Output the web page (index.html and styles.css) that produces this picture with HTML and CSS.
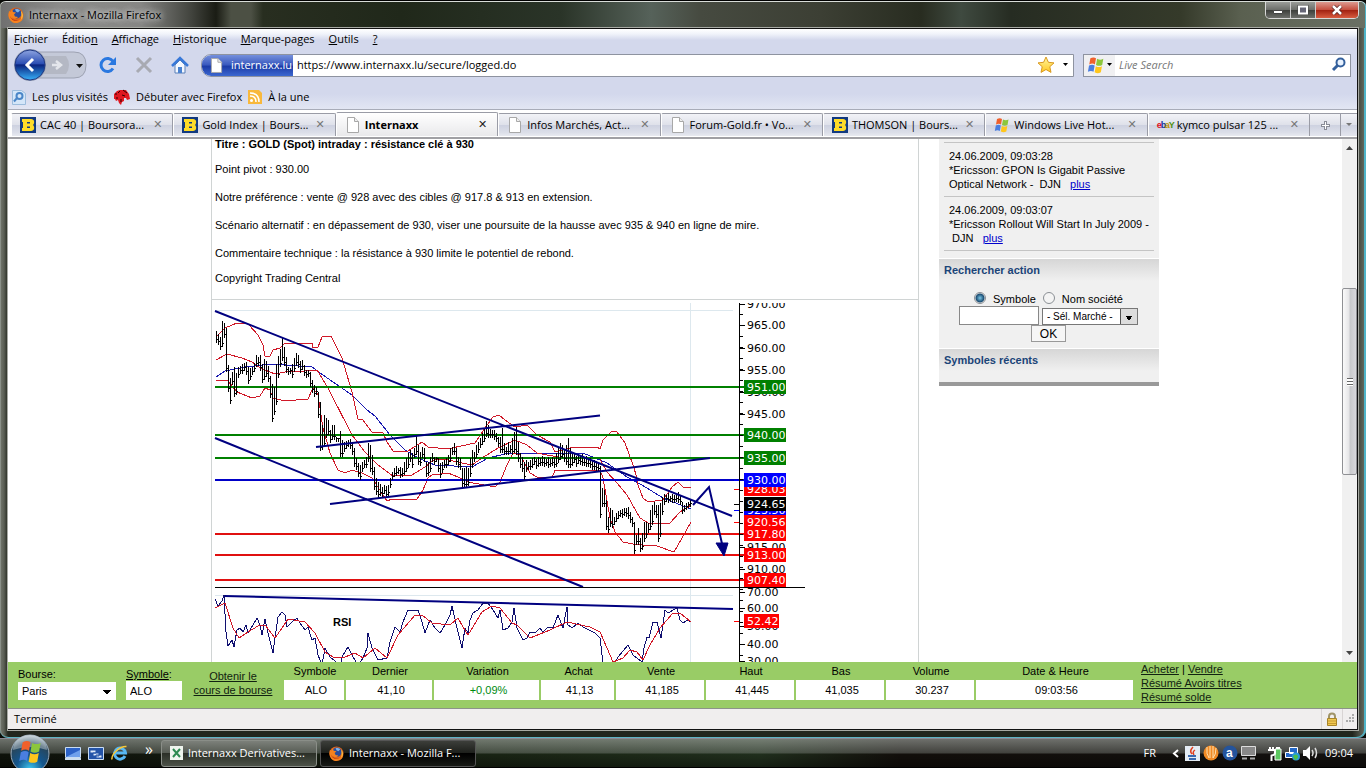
FILE: index.html
```html
<!DOCTYPE html>
<html lang="fr">
<head>
  <meta charset="UTF-8">
  <title>Internaxx - Mozilla Firefox</title>
  <link rel="stylesheet" href="styles.css">
</head>
<body>

  <svg class="defs" width="0" height="0">
    <defs>
      <linearGradient id="g-back" x1="0" y1="0" x2="0" y2="1">
        <stop offset="0" stop-color="#8ea4e0"/><stop offset=".45" stop-color="#2c4fb4"/>
        <stop offset=".5" stop-color="#0a2480"/><stop offset="1" stop-color="#38b0f8"/>
      </linearGradient>
      <linearGradient id="g-star" x1="0" y1="0" x2="0" y2="1">
        <stop offset="0" stop-color="#fff6a0"/><stop offset="1" stop-color="#ffc820"/>
      </linearGradient>
      <radialGradient id="g-orb" cx=".5" cy=".9" r=".9">
        <stop offset="0" stop-color="#40c8f0"/><stop offset=".4" stop-color="#14568e"/><stop offset=".75" stop-color="#27465c"/><stop offset="1" stop-color="#b8c8d0"/>
      </radialGradient>
    </defs>
    <symbol id="firefox" viewBox="0 0 16 16">
      <circle cx="8" cy="8" r="7.5" fill="#e0661a"/>
      <circle cx="8.500" cy="6.500" r="5" fill="#2b4c9c"/>
      <path d="M7 2.500c2-1 4 0 5 1l-2 2-2-1z" fill="#7fb4e8"/>
      <path d="M1 4l1.500 1L4 2.500 5 5l3 .5-2 2 1 2 3 .5c-2 2.500-5 2-6 0 0 2.500 3 4 6 3.500 3-.5 4.500-4 4-7 3 5-1 9.500-6 9.500S0 11 .5 7z" fill="#f58220"/>
      <path d="M13 4c2 2 2.500 6 0 8.500 1-3 .5-6 0-8.500z" fill="#ffd24a"/>
      <path d="M2 9c1 4 5 6 9 4.500-3 .5-7-.5-9-4.500z" fill="#b93010"/>
    </symbol>
    <symbol id="page" viewBox="0 0 14 16">
      <path d="M1.500.5h7l4 4v11h-11z" fill="#fff" stroke="#a8a8a8"/>
      <path d="M8.500.5v4h4" fill="#eee" stroke="#a8a8a8"/>
    </symbol>
    <symbol id="bourso" viewBox="0 0 16 16">
      <path d="M0 0h16v16H0z" fill="#123a80"/>
      <path d="M2 2h9c3.500 0 4 4 2 6 2 2 1.500 6-2 6H2v-3h1V5H2z" fill="#ffdc28"/>
      <path d="M7 5h3v1.500H7zM7 9.500h3V11H7z" fill="#123a80"/>
    </symbol>
    <symbol id="winflag" viewBox="0 0 16 16">
      <path d="M3 2c2-1 3.500-1 5 0L7 7.500c-1.500-1-3-1-5 0z" fill="#f0602c"/>
      <path d="M9 2.500c2 1 3.500 1 5.500 0L13.500 8c-2 1-3.500 1-5.500 0z" fill="#8cc63c"/>
      <path d="M1.800 8.500c2-1 3.500-1 5 0l-1 5.500c-1.500-1-3-1-5 0z" fill="#4a7ee0"/>
      <path d="M7.800 9c2 1 3.500 1 5.500 0l-1 5.500c-2 1-3.500 1-5.500 0z" fill="#ffc61c"/>
    </symbol>
  </svg>

  <div class="window">
    <header class="titlebar">
      <svg class="ico16"><use href="#firefox"/></svg>
      <span class="title">Internaxx - Mozilla Firefox</span>
      <div class="winbuttons">
        <button aria-label="Réduire"><svg width="12" height="10"><path d="M1.500 5.500h9v3h-9z" fill="#fff" stroke="#444"/></svg></button>
        <button aria-label="Agrandir"><svg width="12" height="10"><path d="M2 1.500h8v7H2z" fill="none" stroke="#444" stroke-width="3"/><path d="M2 1.500h8v7H2z" fill="#667" stroke="#fff" stroke-width="2"/></svg></button>
        <button class="close" aria-label="Fermer"><svg width="12" height="10"><path d="M2 1l8 8M10 1l-8 8" stroke="#522" stroke-width="4"/><path d="M2 1l8 8M10 1l-8 8" stroke="#fff" stroke-width="2.500"/></svg></button>
      </div>
    </header>

    <div class="client">
      <div class="chrome">
        <nav class="menubar">
          <a href="#"><u>F</u>ichier</a>
          <a href="#">Éditio<u>n</u></a>
          <a href="#"><u>A</u>ffichage</a>
          <a href="#"><u>H</u>istorique</a>
          <a href="#"><u>M</u>arque-pages</a>
          <a href="#"><u>O</u>utils</a>
          <a href="#"><u>?</u></a>
        </nav>

        <div class="navbar">
          <button class="back" aria-label="Précédent, Suivant">
            <svg width="78" height="34">
              <path d="M18 4h46q12 0 12 13t-12 13H18z" fill="#c4c9d8" stroke="#9da2b2"/>
              <path d="M34 8h22q6 9 0 18H34z" fill="#b4b8c4"/>
              <path d="M46 13l5 4-5 4M51 17h-9" fill="none" stroke="#e4e6ec" stroke-width="2.500"/>
              <path d="M66 16h7l-3.500 4z" fill="#111"/>
              <circle cx="20" cy="17" r="16" fill="#8d96ae"/>
              <circle cx="20" cy="17" r="15" fill="url(#g-back)" stroke="#213a84"/>
              <path d="M23 11l-6 6 6 6" fill="none" stroke="#fff" stroke-width="3"/>
            </svg>
          </button>
          <button class="reload" aria-label="Actualiser">
            <svg width="18" height="18"><path d="M14 12.500a6.500 6.500 0 1 1 0-7" fill="none" stroke="#2a78e0" stroke-width="3"/><path d="M17 1v8H9z" fill="#2a78e0"/></svg>
          </button>
          <button class="stop" aria-label="Arrêter">
            <svg width="18" height="18"><path d="M2 2l14 14M16 2L2 16" stroke="#a8aab2" stroke-width="3"/></svg>
          </button>
          <button class="home" aria-label="Accueil">
            <svg width="18" height="18"><path d="M4 9v8h10V9L9 4z" fill="#f4f8ff" stroke="#5a80b8"/><path d="M1 10l8-8 8 8" fill="none" stroke="#3878d8" stroke-width="2.500"/><path d="M7 11h4v6H7z" fill="#4a82d0"/></svg>
          </button>

          <div class="urlbar">
            <span class="identity"><svg width="13" height="15"><use href="#page"/></svg>internaxx.lu</span>
            <input type="text" aria-label="Adresse" value="https://www.internaxx.lu/secure/logged.do">
            <svg width="18" height="18"><path d="M9 1l2.400 5.300 5.600.6-4.200 3.800 1.200 5.700-5-2.900-5 2.900 1.200-5.700L1 6.900l5.600-.6z" fill="url(#g-star)" stroke="#d89820"/></svg>
            <svg class="drop" width="6" height="4"><path d="M0 0h5L2.500 3z"/></svg>
          </div>

          <div class="searchbar">
            <button aria-label="Moteur de recherche"><svg width="18" height="18"><use href="#winflag"/></svg><svg width="6" height="4"><path d="M0 0h5L2.500 3z"/></svg></button>
            <input type="text" aria-label="Recherche" placeholder="Live Search">
            <svg width="16" height="16"><circle cx="9.500" cy="5.500" r="4" fill="#e8f2ff" stroke="#34609c" stroke-width="2"/><path d="M6.500 8.500L2 13" stroke="#34609c" stroke-width="3"/></svg>
          </div>
        </div>

        <div class="bookmarks">
          <a href="#"><svg width="14" height="16"><path d="M.5 1.500h9l4 3v11H.5z" fill="#d4e6f8" stroke="#9bbcdc"/><circle cx="7.500" cy="7" r="3" fill="none" stroke="#4a86c8" stroke-width="2"/><path d="M5 9l-3 3.500" stroke="#4a86c8" stroke-width="2"/></svg>Les plus visités</a>
          <a href="#"><svg width="16" height="16"><path d="M0 5l3-3 3-1 6 0 3 4 1 5-3 1-1-2-2 0 0 3-2 1-1 3-2-2-1-3-2 1-1-2-1 0z" fill="#e01820"/><path d="M1 5h2M6 2l-2 2M2 9h2M9 1l4 3M7 13v-3M11 7l-3-1" stroke="#300" stroke-width="1"/></svg>Débuter avec Firefox</a>
          <a href="#"><svg width="14" height="14"><path d="M0 0h11l3 3v11H0z" fill="#f8b83c"/><circle cx="3.500" cy="10.500" r="1.500" fill="#fff"/><path d="M2 6q6 0 6 6M2 3q9 0 9 9" fill="none" stroke="#fff" stroke-width="1.500"/></svg>À la une</a>
        </div>
      </div>

      <div class="tabs">
        <a href="#" class="tab"><svg class="ico16"><use href="#bourso"/></svg><span>CAC 40 | Boursora...</span><i>✕</i></a>
        <a href="#" class="tab"><svg class="ico16"><use href="#bourso"/></svg><span>Gold Index | Bours...</span><i>✕</i></a>
        <a href="#" class="tab active"><svg class="ico16"><use href="#page"/></svg><span>Internaxx</span><i>✕</i></a>
        <a href="#" class="tab"><svg class="ico16"><use href="#page"/></svg><span>Infos Marchés, Act...</span><i>✕</i></a>
        <a href="#" class="tab"><svg class="ico16"><use href="#page"/></svg><span>Forum-Gold.fr • Vo...</span><i>✕</i></a>
        <a href="#" class="tab"><svg class="ico16"><use href="#bourso"/></svg><span>THOMSON | Bours...</span><i>✕</i></a>
        <a href="#" class="tab"><svg class="ico16"><use href="#winflag"/></svg><span>Windows Live Hot...</span><i>✕</i></a>
        <a href="#" class="tab"><span class="ebay"><b>e</b><b>b</b><b>a</b><b>Y</b></span><span>kymco pulsar 125 ...</span><i>✕</i></a>
        <button class="newtab" aria-label="Nouvel onglet"><svg width="9" height="9"><path d="M4.500 0v9M0 4.500h9" stroke="#8a8d98" stroke-width="3"/><path d="M4.500 1v7M1 4.500h7" stroke="#fff"/></svg></button>
        <button class="alltabs" aria-label="Liste des onglets"><svg width="6" height="4"><path d="M0 0h6L3 3z" fill="#777"/></svg></button>
      </div>

      <div class="viewport">
        <div class="page">
          <main class="analysis">
            <div class="article">
              <h1>Titre : GOLD (Spot) intraday : résistance clé à 930</h1>
              <p>Point pivot : 930.00</p>
              <p>Notre préférence : vente @ 928 avec des cibles @ 917.8 &amp; 913 en extension.</p>
              <p>Scénario alternatif : en dépassement de 930, viser une poursuite de la hausse avec 935 &amp; 940 en ligne de mire.</p>
              <p>Commentaire technique : la résistance à 930 limite le potentiel de rebond.</p>
              <p>Copyright Trading Central</p>
            </div>
            <svg class="chart" width="706" height="359" viewBox="212 303 706 359">
              <!-- grid -->
              <path d="M215 310.500h518M215 595.500h518M690.500 303v359" stroke="#dde8ee"/>

              <!-- moving average and bands -->
              <g class="thin">
                <polyline class="blue" points="216,377 225,371 245,367 272,364 312,367 320,373 352,395 367,410 375,416 390,435 405,450 418,458 435,465 472,467 488,458 505,454 520,453 583,453 607,463 627,477 642,485 663,498 691,509"/>
                <polyline points="216,337 225,328 237,323 248,324 258,335 263,345 265,356 270,356 273,350 280,348 285,343 312,343 313,348 318,347 322,337 331,336 337,348 342,358 352,392 358,419 363,420 372,432 383,433 387,442 393,451 408,451 422,442 428,447 438,448 452,448 475,443 485,428 493,417 499,415 505,420 515,427 527,425 537,435 550,442 555,452 563,450 573,447 597,447 600,449 603,440 612,431 617,432 625,443 633,465 637,478 638,485 643,498 648,502 663,500 672,487 678,482 683,487 691,488"/>
                <polyline points="216,360 227,354 242,358 252,362 260,368 275,374 285,372 305,371 317,370 328,388 352,435 365,452 378,465 393,476 412,475 425,467 435,459 448,460 472,465 482,458 498,448 515,440 527,445 537,453 563,458 600,459 607,472 617,483 627,495 640,518 650,524 670,523 680,512 691,505"/>
                <polyline points="216,380 228,381 237,392 252,398 260,396 265,388 270,390 273,398 285,401 308,399 313,388 318,395 323,428 330,453 338,470 345,473 352,470 362,473 372,478 387,501 392,499 417,499 423,490 428,478 432,475 448,473 458,477 468,482 495,487 500,482 507,465 513,453 520,455 530,473 537,477 552,478 555,470 600,470 603,478 610,518 615,532 623,542 633,544 643,545 657,546 674,552 682,538 691,522"/>
              </g>

              <!-- support and resistance levels -->
              <path class="level" stroke="#008000" d="M215 387h529M215 435h529M215 458h529"/>
              <path class="level" stroke="#0000c8" d="M215 480h529"/>
              <path class="level" stroke="#e01010" d="M215 534h529M215 555h529M215 580h529"/>

              <path id="bars" stroke="#000" fill="none"/>

              <!-- trend lines -->
              <path class="trend" d="M215 311L732 516M215 438L583 587M316 447L600 415.500M330 504L710 458M693 505L709 487L723 548M224 596L733 609"/>
              <path d="M716 543l12 0-4 13z" fill="#000080" stroke="#000080"/>

              <!-- RSI -->
              <g class="thin">
                <polyline class="navy" points="215,599 218,606 222,601 224,595 226,632 228,646 232,640 234,647 237,630 240,628 243,632 246,625 248,633 253,625 257,618 260,625 262,635 265,619 268,633 273,653 275,638 278,617 282,612 285,615 287,627 292,622 297,618 300,623 305,630 308,627 312,640 315,638 318,655 322,665 325,648 330,657 340,665 343,655 348,647 353,657 358,665 363,658 367,648 368,633 372,648 378,660 387,658 390,642 395,627 400,632 403,622 408,610 413,611 418,610 422,622 425,633 430,620 435,628 440,633 445,625 450,615 452,606 457,628 462,648 465,628 468,633 470,620 473,613 478,610 483,603 488,603 493,610 498,618 500,610 503,630 508,628 512,622 514,608 517,628 523,640 527,638 530,632 535,633 540,628 543,632 548,627 553,628 558,615 563,628 567,607 568,625 572,628 578,623 583,627 595,633 600,638 603,663 615,663 618,657 628,645 633,655 642,662 644,648 647,637 649,638 653,622 657,622 661,638 665,610 668,613 677,608 680,620 683,623 688,620 691,622"/>
                <polyline points="215,608 225,603 233,628 239,638 248,632 258,626 265,625 275,638 282,628 288,619 305,622 315,633 325,652 333,657 345,657 355,653 363,658 375,648 387,658 398,635 415,615 422,615 432,623 450,625 458,618 463,627 468,635 482,612 492,606 500,608 512,623 517,625 530,638 550,630 567,622 590,627 600,632 607,648 613,662 623,658 630,650 637,652 643,660 650,645 660,628 673,613 680,613 691,622"/>
              </g>
              <text class="rsi" x="333" y="626">RSI</text>

              <!-- scale -->
              <path d="M215 587.500h590" stroke="#000"/>
              <path d="M739.500 303v359" stroke="#000"/>
              <g id="scale"></g>
            </svg>
          </main>

          <aside class="side">
            <div class="news">
              <p>24.06.2009, 09:03:28<br>*Ericsson: GPON Is Gigabit Passive<br>Optical Network -&nbsp; DJN &nbsp; <a href="#">plus</a></p>
              <p>24.06.2009, 09:03:07<br>*Ericsson Rollout Will Start In July 2009 -<br>&nbsp;DJN &nbsp; <a href="#">plus</a></p>
            </div>
            <h2>Rechercher action</h2>
            <form class="search">
              <div class="radios">
                <input type="radio" name="type" id="r-sym" checked><label for="r-sym">Symbole</label>
                <input type="radio" name="type" id="r-nom"><label for="r-nom">Nom société</label>
              </div>
              <div class="fields">
                <input type="text" aria-label="Valeur">
                <select aria-label="Marché"><option>- Sél. Marché -</option></select>
              </div>
              <button type="button">OK</button>
            </form>
            <h2>Symboles récents</h2>
          </aside>
        </div>

        <div class="scrollbar">
          <svg width="7" height="4"><path d="M0 4h7L3.500 0z" fill="#444"/></svg>
          <div class="track">
            <div class="thumb"><span></span></div>
          </div>
          <svg width="7" height="4"><path d="M0 0h7L3.500 4z" fill="#444"/></svg>
        </div>
      </div>

      <footer class="quote">
        <div class="field">
          <label for="bourse">Bourse:</label>
          <select id="bourse"><option>Paris</option></select>
        </div>
        <div class="field short">
          <label for="symbole"><u>Symbole</u>:</label>
          <input type="text" id="symbole" value="ALO">
        </div>
        <a href="#" class="get">Obtenir le<br>cours de bourse</a>
        <table>
          <colgroup><col class="c60"><col class="c86"><col class="c105"><col class="c73"><col class="c88"><col class="c88"><col class="c88"><col class="c88"><col class="c157"></colgroup>
          <thead>
            <tr><th>Symbole</th><th>Dernier</th><th>Variation</th><th>Achat</th><th>Vente</th><th>Haut</th><th>Bas</th><th>Volume</th><th>Date &amp; Heure</th></tr>
          </thead>
          <tbody>
            <tr><td>ALO</td><td>41,10</td><td class="up">+0,09%</td><td>41,13</td><td>41,185</td><td>41,445</td><td>41,035</td><td>30.237</td><td>09:03:56</td></tr>
          </tbody>
        </table>
        <div class="links"><a href="#">Acheter</a> | <a href="#">Vendre</a><br><a href="#">Résumé Avoirs titres</a><br><a href="#">Résumé solde</a></div>
      </footer>

      <div class="status">
        <span>Terminé</span>
        <div class="lock"><svg width="12" height="15"><path d="M3 7V4.500a3 3 0 0 1 6 0V7" fill="none" stroke="#a09468" stroke-width="2"/><path d="M1.500 6.500h9v7h-9z" fill="#f0c850" stroke="#a88428"/><path d="M2 9h8M2 11.500h8" stroke="#c89c34"/></svg></div>
        <svg width="12" height="12"><path d="M9 2h2M6 5h2M9 5h2M3 8h2M6 8h2M9 8h2" stroke="#aaa" stroke-width="2"/></svg>
      </div>
    </div>
  </div>

  <div class="taskbar">
    <button class="orb" aria-label="Démarrer">
      <svg width="42" height="34" viewBox="0 0 42 34">
        <circle cx="21" cy="20" r="19" fill="url(#g-orb)" stroke="#9ab" />
        <path d="M4 16a17 15 0 0 1 34 0q-17-6-34 0z" fill="#fff" opacity=".35"/>
        <svg x="9" y="5" width="25" height="25"><use href="#winflag"/></svg>
      </svg>
    </button>
    <div class="quick">
      <a href="#" aria-label="Bureau"><svg width="16" height="13"><path d="M.5.5h15v10H.5z" fill="#2c62c8" stroke="#c8dcf4"/><path d="M1 10L15 3v7z" fill="#6fa0ec"/><path d="M0 12h16" stroke="#cde" stroke-width="2"/></svg></a>
      <a href="#" aria-label="Basculer"><svg width="16" height="13"><path d="M.5.5h15v12H.5z" fill="#2454a8" stroke="#c8dcf4"/><path d="M2 3h6v3H2zM5 6h6v3H5zM8 8h6v3H8z" fill="#dfeaf8" stroke="#2454a8"/></svg></a>
      <a href="#" aria-label="Internet Explorer"><svg width="17" height="16"><path d="M14 11a5.500 5.500 0 1 1 .5-3H5" fill="none" stroke="#58b8f4" stroke-width="3"/><path d="M1 14.500C0 9 9 1 15.500 1.500" fill="none" stroke="#f8c838" stroke-width="1.500"/></svg></a>
    </div>
    <span class="more">»</span>
    <button class="task"><svg width="13" height="14"><path d="M0 0h13v14H0z" fill="#eef4ee"/><path d="M3 3l7 8M10 3l-7 8" stroke="#2c8a50" stroke-width="2"/></svg>Internaxx Derivatives...</button>
    <button class="task current"><svg width="15" height="15"><use href="#firefox"/></svg>Internaxx - Mozilla F...</button>

    <div class="tray">
      <span class="lang">FR</span>
      <svg width="7" height="9"><path d="M6 1L2 4.500 6 8" fill="none" stroke="#fff" stroke-width="2"/></svg>
      <svg class="java" width="15" height="15"><path d="M0 0h15v15H0z" fill="#e4ecf4"/><path d="M8 1q-4 4-1 7M10 4q-3 2-1 5" fill="none" stroke="#e04020" stroke-width="1.500"/><path d="M3 10h8M4 13h7" stroke="#3a68b0" stroke-width="2"/></svg>
      <svg width="16" height="16"><circle cx="8" cy="8" r="7.500" fill="#f08a24"/><path d="M4 2q-1 7 2 11M7 1v12M10 1v12M13 3q0 7-3 10" fill="none" stroke="#ffe0b0"/></svg>
      <svg width="16" height="16"><circle cx="8" cy="8" r="7.500" fill="#24549c"/><text x="4" y="12" class="avast">a</text></svg>
      <svg width="15" height="14"><path d="M.5.500h14v9H.5z" fill="#888" stroke="#ddd"/><path d="M1 12.500h5M9 12.500h5" stroke="#aaa" stroke-width="2"/></svg>
      <svg class="gap" width="14" height="15"><path d="M7 3h6v11H7z" fill="#5cc860" stroke="#fff"/><path d="M8 1h4v2H8z" fill="#fff"/><path d="M0 4h7v3q0 2-3.500 2.500V15M2 1v3M5 1v3" fill="none" stroke="#fff" stroke-width="2"/></svg>
      <svg width="15" height="15"><path d="M4.500 1.500h8v6h-8zM.5 6.500h8v5h-8z" fill="#2468c8" stroke="#fff"/><circle cx="11" cy="10.500" r="4" fill="#2c9ad8"/><path d="M8 10q3-3 5 0 0 3-3 4z" fill="#4cc048"/></svg>
      <svg width="15" height="14"><path d="M0 4h3l4-4v14l-4-4H0z" fill="#fff"/><path d="M9 4q2 3 0 6M12 2q3 5 0 10" fill="none" stroke="#ddd" stroke-width="1.500"/></svg>
      <span class="clock">09:04</span>
    </div>
  </div>

  <script src="chart.js"></script>
</body>
</html>
```
FILE: styles.css
```css
* { box-sizing: border-box; }
body { margin: 0; height: 100vh; display: flex; flex-direction: column; overflow: hidden; background: #0a0c08; font: 11px/14px "Liberation Sans", Arial, sans-serif; color: #000; }
button { padding: 0; border: none; background: none; font: inherit; color: inherit; }
input, select { font: inherit; color: inherit; border: none; margin: 0; border-radius: 0; }
svg { display: block; flex: none; }
.defs { position: absolute; }
.ico16 { width: 16px; height: 16px; }

/* window frame */
.window { flex: 1; min-height: 0; display: flex; flex-direction: column; padding: 0 8px 7px; border-top: 1px solid #000; border-bottom: 1px solid #5fb4c4; border-radius: 6px 6px 8px 8px; box-shadow: inset 0 1px #d8dcd8, inset 1px 0 #8a9088, inset -2px 0 #4fb4c8;
  background: linear-gradient(90deg, #74786e 0, #5a5e54 4px, #22261e 8px, #22261e 99%, #6c7268 100%); }
.titlebar { height: 26px; flex: none; display: flex; align-items: center; gap: 5px; margin: 1px -7px 0; padding-left: 7px; border-radius: 5px 5px 0 0;
  background: linear-gradient(90deg, #707070 0, #8c8c8a 60px, #868684 140px, #42443e 190px, #1a1c14 215px, #4c5044 230px, #4c5044 250px, #282e20 262px, #20281a 400px, #2a3428 560px, #56625a 650px, #464a40 700px, #3c3f34 820px, #282c20 920px, #3f4a40 960px, #262c22 1010px, #353a2a 1180px, #5a6050 1240px, #6a7064 100%); }
.title { font: 11px/16px "Open Sans", sans-serif; flex: 1; text-shadow: 0 0 6px #ddd, 0 0 6px #ddd; }
.winbuttons { align-self: flex-start; display: flex; height: 17px; margin-right: 6px; border: 1px solid #d8d8d8; border-top: none; border-radius: 0 0 5px 5px; overflow: hidden; }
.winbuttons button { width: 25px; display: flex; align-items: center; justify-content: center; border-right: 1px solid #ccc; background: linear-gradient(#9a9c98, #6a6c68 50%, #3c3e3a 50%, #6c6e6a); }
.winbuttons .close { width: 42px; border: none; background: linear-gradient(#dc9a90, #c44c3c 50%, #a02010 50%, #d85c40); }
.client { flex: 1; min-height: 0; display: flex; flex-direction: column; border: 1px solid #111; border-width: 1px 1px 1px 0; outline: 1px solid #a8aaa4; background: #fff; }

/* toolbars */
.chrome { font: 11px/16px "Open Sans", sans-serif; background: linear-gradient(#fff 0, #f0f3fa 5px, #d3d8ec 11px, #d3d8ec 65px, #e2e6f3 100%); border-bottom: 1px solid #a8acb8; }
.menubar { display: flex; gap: 14px; height: 19px; align-items: center; padding-left: 6px; }
.menubar a, .bookmarks a { color: #000; text-decoration: none; }
.navbar { display: flex; align-items: center; height: 34px; padding-right: 6px; }
.navbar .back { margin-left: 2px; }
.reload { margin-left: 11px; }
.stop, .home { margin-left: 18px; }
.urlbar { flex: 1; display: flex; align-items: center; height: 23px; margin-left: 12px; padding-right: 4px; gap: 4px; background: #fff; border: 1px solid #8e93a0; border-radius: 10px 0 0 10px; overflow: hidden; }
.urlbar input { flex: 1; min-width: 0; padding: 0; background: none; }
.urlbar .drop { margin: 0 0 0 4px; }
.identity { display: flex; align-items: center; gap: 8px; height: 100%; padding: 0 1px 0 8px; color: #fff; background: linear-gradient(#7590dc, #3c5cc0 45%, #1c3ca8 55%, #3c68d0); }
.searchbar { display: flex; align-items: center; width: 268px; height: 23px; margin-left: 9px; padding-right: 3px; background: #fff; border: 1px solid #8e93a0; }
.searchbar button { display: flex; align-items: center; gap: 2px; width: 31px; height: 100%; padding-left: 3px; background: #f0f0f2; }
.searchbar input { flex: 1; min-width: 0; padding: 0 4px; font-style: italic; background: none; }
.searchbar input::placeholder { color: #777; }
.bookmarks { display: flex; align-items: center; gap: 6px; height: 27px; padding: 3px 0 0 4px; }
.bookmarks a { display: flex; align-items: center; gap: 6px; }

/* tabs */
.tabs { display: flex; height: 29px; padding: 3px 0 1px 3px; background: #fff; border-bottom: 2px solid #a0a0a4; font: 11px/16px "Open Sans", sans-serif; }
.tab { flex: 1; min-width: 0; display: flex; align-items: center; gap: 4px; padding: 0 10px 0 8px; color: #000; text-decoration: none; white-space: nowrap; border: 1px solid #9a9ca6; border-left-color: #fff; border-bottom: none; border-radius: 2px 2px 0 0; background: linear-gradient(#f2f3f7, #dfe1ea 48%, #cdd1e0 50%, #dcdfe9 85%, #e8eaf0); }
.tab span { flex: 1; }
.tab i { font: 11px/16px "DejaVu Sans", sans-serif; color: #777; }
.tab.active { margin-top: -1px; font-weight: bold; background: linear-gradient(#fff, #e9e9eb); }
.tab.active i { color: #222; }
.tab .ebay { flex: none; width: 16px; display: flex; font: bold 9px/12px "Liberation Sans", sans-serif; }
.ebay b { width: 4px; flex: none; }
.ebay b:nth-child(1) { color: #e01020; }
.ebay b:nth-child(2) { color: #1030a0; }
.ebay b:nth-child(3) { color: #c09000; }
.ebay b:nth-child(4) { color: #509010; }
.newtab, .alltabs { display: flex; align-items: center; justify-content: center; border: 1px solid #9a9ca6; border-width: 1px 1px 0 0; background: linear-gradient(#f2f3f7, #dfe1ea 48%, #cdd1e0 50%, #e4e6ee); }
.newtab { width: 31px; }
.alltabs { width: 16px; border-right: none; }

/* web page */
.viewport { flex: 1; min-height: 0; display: flex; }
.page { flex: 1; min-width: 0; display: flex; align-items: flex-start; gap: 20px; overflow: hidden; padding-left: 203px; }
.analysis { flex: none; width: 708px; border: 1px solid #d0d4d4; border-width: 0 1px; }
.article { padding: 0 3px 14px; border-bottom: 1px solid #d0d4d4; margin-bottom: 3px; }
.article h1 { margin: -2px 0 11px; font-size: 11px; }
.article p { margin: 0 0 14px; }
.article p:last-child { margin: -3px 0 0; }
.chart .thin { fill: none; stroke: #d01828; shape-rendering: crispEdges; }
.chart .blue { stroke: #1818b0; }
.chart .navy { stroke: #101070; }
.chart .level { fill: none; stroke-width: 2; }
.chart .trend { fill: none; stroke: #000080; stroke-width: 2; }
#bars { shape-rendering: crispEdges; }
.chart text { font: 11px "DejaVu Sans", Verdana, sans-serif; }
.chart .rsi { font: bold 11px "Liberation Sans", sans-serif; }

.side { width: 220px; flex: none; background: #f0f0f0; border-bottom: 4px solid #999; }
.news { padding: 3px 5px 7px; }
.news p { margin: 0; padding: 6px 5px 5px; border-top: 1px solid #c4c4c4; white-space: nowrap; }
.news p:last-child { border-bottom: 1px solid #c4c4c4; }
.news a { color: #00c; }
.side h2 { height: 34px; margin: 0; padding: 4px 5px 0; font-size: 11px; color: #1a4478; border-top: 1px solid #fff; background: linear-gradient(#d6d6d6, #f0f0f0 22px); }
.search { display: flex; flex-direction: column; align-items: center; height: 56px; padding-right: 1px; }
.radios { display: flex; align-items: flex-start; gap: 7px; height: 14px; }
.radios input { appearance: none; width: 12px; height: 12px; border: 1px solid #8a8f94; border-radius: 50%; background: #f4f4f4; }
.radios input:checked { background: radial-gradient(#7ac8e8 0, #1a4a70 4px, #eee 5px); }
.fields { display: flex; align-items: flex-end; gap: 3px; }
.fields input { width: 80px; height: 19px; border: 1px solid #888; background: #fff; }
.fields select { appearance: none; width: 96px; height: 17px; padding-left: 4px; font-size: 10px; border: 1px solid #777;
  background: conic-gradient(from -45deg at 50% 100%, #000 90deg, transparent 0) right 4px bottom 4px / 8px 4px no-repeat, linear-gradient(90deg, #fff 77px, #555 77px, #555 78px, #ddd 78px); }
.search button { width: 35px; height: 17px; font-size: 12px; border: 1px solid #999; background: #f6f6f6; }

.scrollbar { width: 15px; display: flex; flex-direction: column; align-items: center; padding: 7px 0; background: #f0f0f0; }
.track { flex: 1; align-self: stretch; display: flex; flex-direction: column; margin: 6px 0; }
.track::before { content: ""; flex: 133; }
.track::after { content: ""; flex: 171; }
.thumb { flex: 186; display: flex; align-items: center; justify-content: center; border: 1px solid #8f9094; border-radius: 2px; background: linear-gradient(90deg, #fafafa, #e6e6e8 45%, #c8c9cc 55%, #d8d8dc); }
.thumb span { width: 6px; height: 8px; background: repeating-linear-gradient(#666 0 1px, #fff 1px 3px); }

/* quote bar */
.quote { flex: none; display: flex; align-items: flex-start; height: 47px; padding-left: 10px; background: #99cc66; border-bottom: 1px solid #8c9488; }
.quote .field { display: flex; flex-direction: column; width: 98px; padding-top: 5px; }
.quote .short { width: 56px; margin-left: 10px; }
.quote .field input { width: 100%; height: 19px; padding: 0 4px; background: #fff; }
.quote select { appearance: none; height: 18px; margin-top: 1px; padding: 0 4px;
  background: conic-gradient(from -45deg at 50% 100%, #000 90deg, transparent 0) right 5px bottom 6px / 8px 4px no-repeat #fff; }
.get { width: 98px; margin-left: 2px; padding-top: 7px; text-align: center; color: #121; }
.quote table { table-layout: fixed; width: 853px; border-spacing: 2px 0; }
.c60 { width: 60px; } .c86 { width: 86px; } .c105 { width: 105px; } .c73 { width: 73px; } .c88 { width: 88px; } .c157 { width: 157px; }
.quote th { height: 18px; padding: 0 0 0 2px; font-weight: normal; }
.quote td { height: 20px; padding: 0 0 0 4px; text-align: center; background: #fff; }
.quote .up { color: #008a10; }
.links { margin-left: 6px; white-space: nowrap; }
.links a { color: #121; }

.status { flex: none; display: flex; align-items: center; height: 20px; background: #f0eeee; padding: 0 2px 0 6px; gap: 8px; font: 11px/16px "Open Sans", sans-serif; }
.status span { flex: 1; }
.lock { height: 100%; display: flex; align-items: center; padding: 0 4px; border: 1px solid #d8d4d4; border-width: 0 1px; }
.status > svg { margin-left: -8px; }

/* taskbar */
.taskbar { flex: none; height: 30px; display: flex; align-items: center; border-top: 1px solid #8c8894; color: #fff; font: 11px/16px "Open Sans", sans-serif; background: linear-gradient(rgba(170,175,170,.6), rgba(120,125,120,.45) 14px, rgba(0,0,0,.1) 15px, rgba(0,0,0,.4)), linear-gradient(90deg, #10140c, #1c2816 500px, #243420 760px, #14100c 900px, #141210); border-bottom: 1px solid #000; }
.orb { margin: -5px 0 0 9px; }
.quick { display: flex; align-items: center; gap: 7px; margin-left: 14px; }
.more { margin: -8px 0 0 17px; font-size: 16px; }
.task { display: flex; align-items: center; gap: 5px; width: 156px; height: 27px; margin-left: 8px; padding-left: 8px; border: 1px solid #8a8e88; border-radius: 3px; white-space: nowrap; background: linear-gradient(#7c807a, #555a52 50%, #2c3028 50%, #4c5248); }
.task.current { margin-left: 3px; background: linear-gradient(#3c3e3a, #1c1e1a 50%, #000 50%, #181a16); border-color: #555; }
.tray { margin-left: auto; display: flex; align-items: center; gap: 3px; padding-right: 13px; }
.lang { margin-right: 13px; }
.tray .java { margin-left: 3px; }
.tray .gap { margin-left: 9px; }
.clock { margin-left: 4px; }
.avast { font: bold 12px "Liberation Sans", sans-serif; fill: #fff; }
```
FILE: chart.js
```js
// price bars: high,low every 2px starting at x = 216
const bars = `331,343 334,345 337,350 321,347 323,338 328,372 365,392 378,404 372,385 367,397 373,395 367,378 366,374 364,374
363,371 362,375 367,384 368,380 367,375 363,372 355,367 357,366 355,371 364,383 359,380 361,377 366,382 376,398 384,422 387,415
364,405 356,378 349,367 338,361 347,366 357,373 367,375 368,374 364,378 358,372 353,366 355,368 361,373 360,370 365,376 370,378
370,377 372,387 380,393 385,397 387,395 392,418 402,451 425,450 415,447 418,438 420,435 430,443 425,440 425,440 437,442 438,442
431,457 440,457 442,452 441,449 440,447 439,449 443,455 448,467 458,470 463,477 465,480 462,472 460,468 457,468 443,462 445,472
455,475 467,490 478,495 482,498 484,496 487,497 485,494 486,498 485,496 478,488 472,480 468,477 466,476 468,474 467,478 468,477
462,475 458,472 453,468 450,462 453,468 448,458 435,455 445,465 452,466 447,458 448,462 462,477 462,476 457,472 453,462 457,465
457,462 458,472 463,478 462,473 460,468 458,468 455,465 448,462 447,455 443,455 448,465 457,468 458,470 468,487 468,488 467,488
468,486 458,477 450,468 452,462 445,458 442,453 438,448 433,445 428,442 421,437 425,438 429,438 430,438 430,440 433,442 437,447
437,453 428,453 443,455 447,455 442,455 445,453 438,455 432,453 427,455 442,462 453,468 457,472 462,480 460,472 462,470 460,470
458,468 457,465 459,469 457,467 458,466 456,466 457,467 459,466 457,468 459,467 457,466 458,468 453,467 448,463 443,460 445,458
450,462 445,465 438,468 448,468 454,466 453,463 456,467 454,464 455,465 454,466 457,466 456,467 459,467 458,468 460,470 460,470
461,471 462,472 466,518 488,507 490,507 500,530 517,533 508,527 510,528 517,525 513,522 511,519 510,517 509,518 508,516 508,517
507,519 512,523 517,527 522,554 535,545 528,545 538,552 533,550 522,542 522,538 523,533 510,530 505,525 502,515 505,518 505,542
503,537 497,515 494,505 495,502 493,503 496,502 494,503 495,503 493,502 492,503 496,505 502,514 505,512 503,510 502,508 500,507`;

document.getElementById('bars').setAttribute('d', bars.split(/\s+/).map((bar, i) => {
  const [high, low] = bar.split(',').map(Number);
  const x = 216 + i * 2;
  return `M${x + 0.5} ${high}V${low}M${x} ${low - 3.5}h2M${x} ${high + 3.5}h1`;
}).join(''));

// [y, label, background]
const scale = [
  [304, '970.00'], [325, '965.00'], [348, '960.00'], [370, '955.00'], [392, '950.00'], [414, '945.00'],
  [547, '915.00'], [569, '910.00'], [592, '70.00'], [608, '60.00'], [626, '50.00'], [644, '40.00'], [661, '30.00'],
  [387, '951.00', '#008000'], [435, '940.00', '#008000'], [458, '935.00', '#008000'],
  [489, '928.03', '#ff0000'], [480, '930.00', '#0000ff'], [510, '923.50', '#0000ff'], [504, '924.65', '#000000'],
  [522, '920.56', '#ff0000'], [534, '917.80', '#ff0000'], [555, '913.00', '#ff0000'], [580, '907.40', '#ff0000'],
  [621, '52.42', '#ff0000'],
];

let html = '';
for (let y = 314; y < 660; y += 11) {
  html += `<path d="M740 ${y}.5h3" stroke="#000"/>`;
}
for (const [y, label, color] of scale) {
  html += `<path d="M${color ? 734 : 740} ${y}.5h5" stroke="${color || '#000'}"/>`;
  if (color) {
    html += `<rect x="744" y="${y - 7}" width="${label.length * 7}" height="14" fill="${color}"/>`;
  }
  html += `<text x="747" y="${y + 4}" fill="${color ? '#fff' : '#000'}">${label}</text>`;
}
document.getElementById('scale').innerHTML = html;
```
